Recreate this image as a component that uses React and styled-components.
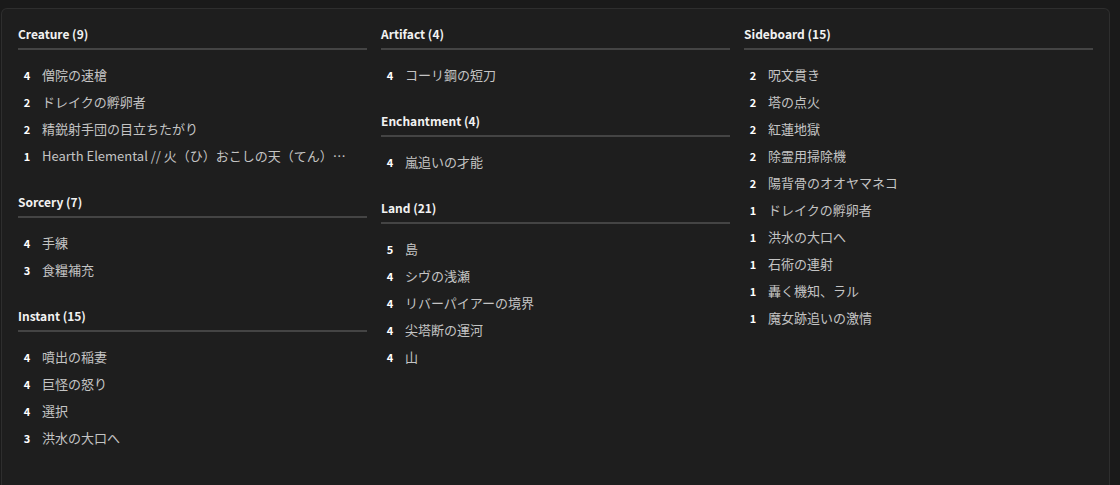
import React from "react";
import styled, { createGlobalStyle } from "styled-components";

const Global = createGlobalStyle`
  html, body { margin: 0; height: 485px; overflow: hidden; background: #1a1a1a; font-family: "Noto Sans CJK JP", "Noto Sans", sans-serif; }
`;

const Panel = styled.div`
  margin: 8px 10px 0 1px;
  height: 480px;
  box-sizing: border-box;
  background: #1e1e1e;
  border: 1px solid #2e2e2e;
  border-bottom: none;
  border-radius: 6px 6px 0 0;
  padding: 15px 16px 0 16px;
  display: grid;
  grid-template-columns: repeat(3, 349px);
  column-gap: 14px;
  align-content: start;
`;

const Column = styled.div`
  display: flex;
  flex-direction: column;
  gap: 23px;
`;

const Header = styled.div`
  color: #f2f2f2;
  font-size: 12px;
  font-weight: 700;
  line-height: 20px;
  padding-bottom: 4px;
  border-bottom: 2px solid #444;
`;

const List = styled.div`
  padding-top: 11px;
`;

const Row = styled.div`
  display: flex;
  align-items: center;
  height: 27px;
  font-size: 13px;
  min-width: 0;
`;

const Count = styled.span`
  width: 10px;
  margin-left: 4px;
  margin-right: 10px;
  text-align: center;
  color: #fff;
  font-weight: 700;
  font-size: 11px;
  flex: none;
`;

const Name = styled.span`
  color: #c4c4c4;
  white-space: nowrap;
  overflow: hidden;
  text-overflow: ellipsis;
  min-width: 0;
`;

const data = [
  [
    ["Creature (9)", [[4, "僧院の速槍"], [2, "ドレイクの孵卵者"], [2, "精鋭射手団の目立ちたがり"], [1, "Hearth Elemental // 火（ひ）おこしの天（てん）…"]]],
    ["Sorcery (7)", [[4, "手練"], [3, "食糧補充"]]],
    ["Instant (15)", [[4, "噴出の稲妻"], [4, "巨怪の怒り"], [4, "選択"], [3, "洪水の大口へ"]]],
  ],
  [
    ["Artifact (4)", [[4, "コーリ鋼の短刀"]]],
    ["Enchantment (4)", [[4, "嵐追いの才能"]]],
    ["Land (21)", [[5, "島"], [4, "シヴの浅瀬"], [4, "リバーパイアーの境界"], [4, "尖塔断の運河"], [4, "山"]]],
  ],
  [
    ["Sideboard (15)", [[2, "呪文貫き"], [2, "塔の点火"], [2, "紅蓮地獄"], [2, "除霊用掃除機"], [2, "陽背骨のオオヤマネコ"], [1, "ドレイクの孵卵者"], [1, "洪水の大口へ"], [1, "石術の連射"], [1, "轟く機知、ラル"], [1, "魔女跡追いの激情"]]],
  ],
];

export default function App() {
  return (
    <>
      <Global />
      <Panel>
        {data.map((col, i) => (
          <Column key={i}>
            {col.map(([title, cards]) => (
              <section key={title}>
                <Header>{title}</Header>
                <List>
                  {cards.map(([n, name], j) => (
                    <Row key={j}>
                      <Count>{n}</Count>
                      <Name>{name}</Name>
                    </Row>
                  ))}
                </List>
              </section>
            ))}
          </Column>
        ))}
      </Panel>
    </>
  );
}
